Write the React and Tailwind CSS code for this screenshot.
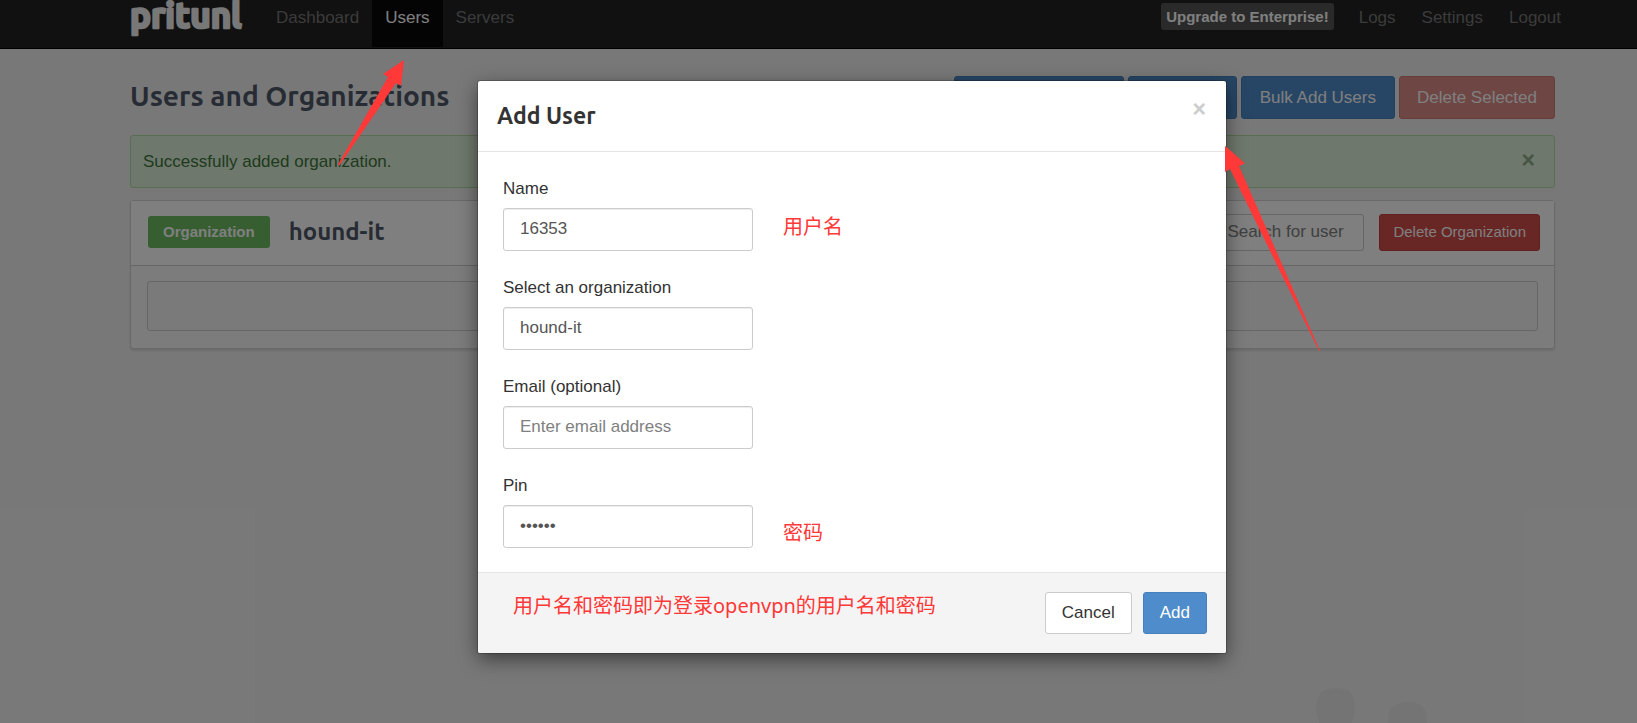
import React from "react";

const navLink = "flex h-12 items-start px-[13px] pt-1 text-[17px] leading-7 text-[#777]";
const primary = "h-[43px] rounded-[3px] border border-[#4680bd] bg-[#4f8ccb] px-[18px] text-[17px] text-white";
const field =
  "h-[43px] w-[250px] rounded-[3px] border border-[#ccc] bg-white px-4 pb-[2px] text-[17px] text-[#555] shadow-[inset_0_1px_1px_rgba(0,0,0,0.075)] placeholder:text-[#808080]";
const heading = "font-['Ubuntu','Noto_Sans',sans-serif] font-bold";
const note =
  "font-['Noto_Sans','Noto_Sans_CJK_SC',sans-serif] text-[20px] leading-7 text-[#ff3838]";

function Logo() {
  return (
    <svg width="120" height="44" viewBox="0 0 120 44" role="img" aria-label="pritunl" className="block">
      <text
        x="0"
        y="28"
        fontFamily="'Fredoka One', Ubuntu, 'Noto Sans', sans-serif"
        fontWeight="700"
        fontSize="35"
        fill="#f1f1f1"
        stroke="#f1f1f1"
        strokeWidth="2.5"
        strokeLinejoin="round"
      >
        pritunl
      </text>
    </svg>
  );
}

function Navbar() {
  return (
    <header className="border-b border-black bg-[#222]">
      <nav className="flex h-12 items-start pr-[63px] pl-[130px]">
        <a href="#home" className="mr-[13px]">
          <Logo />
        </a>
        <a href="#dashboard" className={navLink}>Dashboard</a>
        <a href="#users" className="flex h-[47px] items-start bg-[#080808] px-[13px] pt-1 text-[17px] leading-7 text-white">
          Users
        </a>
        <a href="#servers" className={navLink}>Servers</a>
        <div className="ml-auto flex items-start">
          <a
            href="#upgrade"
            className="mt-[3px] mr-3 rounded-[3px] bg-[#555] px-[5px] text-[15px] leading-[27px] font-bold text-white"
          >
            Upgrade to Enterprise!
          </a>
          <a href="#logs" className={navLink}>Logs</a>
          <a href="#settings" className={navLink}>Settings</a>
          <a href="#logout" className={navLink}>Logout</a>
        </div>
      </nav>
    </header>
  );
}

function Page() {
  return (
    <main className="pt-[27px] pr-[82px] pl-[130px]">
      <div className="flex h-[43px] items-center justify-between">
        <h1 className={`${heading} pb-1 text-[28px] leading-9 text-[#4f5869]`}>Users and Organizations</h1>
        <div className="flex gap-1">
          <button type="button" className={primary}>Add Organization</button>
          <button type="button" className={primary}>Add User</button>
          <button type="button" className={primary}>Bulk Add Users</button>
          <button
            type="button"
            className="h-[43px] rounded-[3px] border border-[#d27a76] bg-[#dc8c88] px-[17px] text-[17px] text-white"
          >
            Delete Selected
          </button>
        </div>
      </div>

      <div
        role="alert"
        className="mt-4 flex h-[53px] items-center justify-between rounded-[3px] border border-[#b2dba1] bg-[#dff0d8] pr-[19px] pl-3 text-[17px] text-[#3c763d]"
      >
        <span>Successfully added organization.</span>
        <button type="button" aria-label="Dismiss" className="pb-[3px] text-[23px] leading-6 font-bold text-[#8fac88]">
          ×
        </button>
      </div>

      <section className="mt-3 rounded-[3px] border border-[#d2d2d2] bg-[#f9f9f9] shadow-[0_2px_2px_rgba(0,0,0,0.1)]">
        <div className="flex h-[65px] items-center border-b border-[#ccc] bg-white pr-[14px] pb-[2px] pl-[17px]">
          <span className="rounded-[3px] bg-[#6cbc62] px-[15px] text-[15px] leading-8 font-bold text-white">
            Organization
          </span>
          <h2 className={`${heading} ml-[19px] text-[24px] leading-8 text-[#4f5869]`}>hound-it</h2>
          <input
            type="text"
            aria-label="Search for user"
            placeholder="Search for user"
            className="ml-auto h-[37px] w-[153px] rounded-[3px] border border-[#ccc] bg-white px-[15px] text-[17px] placeholder:text-[#808080]"
          />
          <button
            type="button"
            className="ml-[15px] h-[37px] rounded-[3px] border border-[#c4423e] bg-[#d04c4a] px-[13px] text-[15px] text-white"
          >
            Delete Organization
          </button>
        </div>
        <div className="px-4 pt-[15px] pb-[17px]">
          <div className="h-[50px] rounded-[3px] border border-[#ccc] bg-[#f5f5f5]" />
        </div>
      </section>
    </main>
  );
}

function Watermark() {
  return (
    <svg className="absolute right-[209px] bottom-0" width="112" height="35" viewBox="0 0 112 35" aria-hidden="true">
      <path d="M3 35Q0 26 0 20Q0 8 7 3Q12 0 20 0Q28 0 33 3Q39 8 39 20Q39 26 36 35Z" fill="#e9e9e9" />
      <path d="M72 35Q72 20 78 18Q84 14 92 14Q101 14 106 18Q111 21 111 35Z" fill="#e9e9e9" />
    </svg>
  );
}

function Field({ id, label, hint, children }) {
  return (
    <div>
      <label htmlFor={id} className="block pb-[7px] text-[17px] leading-6 text-[#333]">{label}</label>
      <div className="flex items-center gap-[30px]">
        {children}
        {hint}
      </div>
    </div>
  );
}

function AddUser() {
  return (
    <div className="absolute inset-0 flex items-start justify-center bg-black/50 pt-[81px] pl-[67px]">
      <div
        role="dialog"
        aria-labelledby="dialog-title"
        className="w-[748px] rounded-[2px] bg-white shadow-[0_0_0_1px_rgba(0,0,0,0.2),0_6px_19px_rgba(0,0,0,0.5)]"
      >
        <div className="flex h-[71px] items-start justify-between border-b border-[#e5e5e5] pt-[19px] pr-5 pl-[19px]">
          <h2 id="dialog-title" className={`${heading} text-[23px] leading-8 text-[#333]`}>Add User</h2>
          <button type="button" aria-label="Close" className="text-[23px] leading-[18px] font-bold text-[#ccc]">
            ×
          </button>
        </div>
        <form className="flex flex-col gap-[25px] px-[25px] pt-[25px] pb-6">
          <Field id="name" label="Name" hint={<span className={`${note} pb-[6px]`}>用户名</span>}>
            <input id="name" type="text" defaultValue="16353" className={field} />
          </Field>
          <Field id="org" label="Select an organization">
            <select id="org" className={`${field} appearance-none`}>
              <option>hound-it</option>
            </select>
          </Field>
          <Field id="email" label="Email (optional)">
            <input id="email" type="text" placeholder="Enter email address" className={field} />
          </Field>
          <Field id="pin" label="Pin" hint={<span className={`${note} pt-3`}>密码</span>}>
            <input id="pin" type="password" defaultValue="163530" className={field} />
          </Field>
        </form>
        <div className="flex h-[81px] items-start rounded-b-[2px] border-t border-[#e5e5e5] bg-[#f4f4f4] pt-[19px] pr-[19px] pl-[35px]">
          <p className={note}>用户名和密码即为登录openvpn的用户名和密码</p>
          <button
            type="button"
            className="ml-auto h-[42px] rounded-[3px] border border-[#ccc] bg-white px-4 text-[17px] text-[#333]"
          >
            Cancel
          </button>
          <button
            type="button"
            className="ml-[11px] h-[42px] rounded-[3px] border border-[#4680bd] bg-[#4f8ccb] px-4 text-[17px] text-white"
          >
            Add
          </button>
        </div>
      </div>
    </div>
  );
}

function Arrows() {
  return (
    <>
      <svg className="pointer-events-none absolute top-[60px] left-[338px]" width="67" height="106" viewBox="0 0 67 106" aria-hidden="true">
        <path d="M66 0L45 14L50 17L0 104.500L1 106L58 23L63 26Z" fill="#ff3838" />
      </svg>
      <svg className="pointer-events-none absolute top-[146px] left-[1225px]" width="95" height="206" viewBox="0 0 95 206" aria-hidden="true">
        <path d="M0 0L1.500 1L20 17.500L14 20L95 205L94 205L5 23L0 26Z" fill="#ff3838" />
      </svg>
    </>
  );
}

export default function App() {
  return (
    <div className="relative min-h-screen overflow-hidden bg-[#f1f1f1] font-['Liberation_Sans',Arial,sans-serif]">
      <Navbar />
      <Page />
      <Watermark />
      <AddUser />
      <Arrows />
    </div>
  );
}
